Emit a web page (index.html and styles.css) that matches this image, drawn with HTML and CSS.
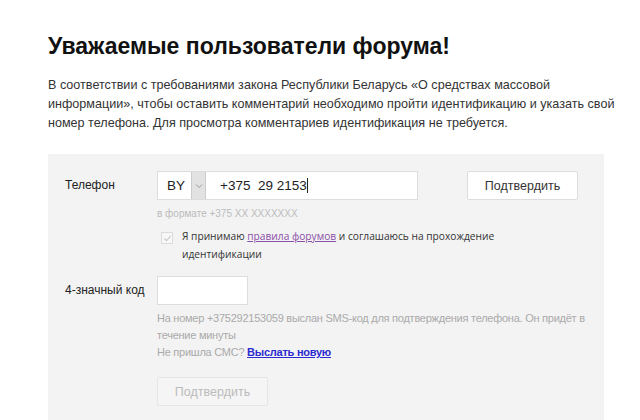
FILE: index.html
```html
<!DOCTYPE html>
<html lang="ru">
<head>
    <meta charset="UTF-8">
    <title>Идентификация</title>
    <link rel="stylesheet" href="styles.css">
</head>
<body>
    <div class="page">
        <h1>Уважаемые пользователи форума!</h1>
        <p class="intro">В соответствии с требованиями закона Республики Беларусь «О средствах массовой информации», чтобы оставить комментарий необходимо пройти идентификацию и указать свой номер телефона. Для просмотра комментариев идентификация не требуется.</p>

        <div class="panel">
            <div class="row">
                <div class="label">Телефон</div>
                <div class="field">
                    <div class="phone">
                        <div class="country">BY</div>
                        <div class="arrow">
                            <svg width="8" height="6" viewBox="0 0 8 6"><path d="M1 1.5 L4 4.5 L7 1.5" fill="none" stroke="#999" stroke-width="1"/></svg>
                        </div>
                        <div class="number">+375&nbsp; 29 2153<span class="caret"></span></div>
                    </div>
                    <div class="hint">в формате +375 XX XXXXXXX</div>
                    <div class="agree">
                        <span class="check">
                            <svg width="9" height="9" viewBox="0 0 10 10"><path d="M1.5 5 L4 7.5 L8.5 2" fill="none" stroke="#c8c8c8" stroke-width="1.2"/></svg>
                        </span>
                        <p class="agree-text">Я принимаю <a href="#" class="rules">правила форумов</a> и соглашаюсь на прохождение<br>идентификации</p>
                    </div>
                </div>
                <button class="btn">Подтвердить</button>
            </div>

            <div class="row">
                <div class="label">4-значный код</div>
                <div class="field">
                    <div class="code"></div>
                    <div class="sms">На номер +375292153059 выслан SMS-код для подтверждения телефона. Он придёт в течение минуты<br>Не пришла СМС? <a href="#" class="resend">Выслать новую</a></div>
                    <button class="btn btn-disabled">Подтвердить</button>
                </div>
            </div>
        </div>
    </div>
</body>
</html>
```

FILE: styles.css
```css
body {
    margin: 0;
    background: #fff;
    font-family: "Liberation Sans", Arial, sans-serif;
    color: #222;
}
.page {
    padding: 33px 0 0 48px;
}
h1 {
    margin: 0;
    font-size: 23px;
    font-weight: bold;
    color: #111;
}
.intro {
    margin: 16px 0 0;
    font-size: 12.6px;
    line-height: 19px;
    color: #333;
    width: 570px;
}
.panel {
    margin-top: 21px;
    background: #f3f3f3;
    padding: 17px 0 14px 17px;
    width: 539px;
}
.row {
    display: flex;
    align-items: flex-start;
}
.row + .row {
    margin-top: 13px;
}
.label {
    width: 92px;
    font-size: 12px;
    line-height: 29px;
    color: #222;
}
.field {
    width: 261px;
}
.phone {
    display: flex;
    height: 27px;
    border: 1px solid #ddd;
    background: #fff;
    font-size: 13.5px;
    color: #222;
}
.country {
    width: 24px;
    padding-left: 9px;
    line-height: 27px;
}
.arrow {
    width: 13px;
    background: #e2e2e2;
    border-left: 1px solid #ccc;
    border-right: 1px solid #ccc;
    display: flex;
    align-items: center;
    justify-content: center;
}
.number {
    padding-left: 14px;
    line-height: 27px;
}
.caret {
    display: inline-block;
    width: 1px;
    height: 15px;
    background: #222;
    vertical-align: -3px;
}
.hint {
    margin-top: 8px;
    font-size: 10px;
    color: #bbb;
}
.agree {
    display: flex;
    align-items: flex-start;
    margin-top: 8px;
    width: 360px;
}
.check {
    flex: none;
    width: 10px;
    height: 10px;
    margin: 5px 9px 0 4px;
    border: 1px solid #dcdcdc;
    background: #f7f7f7;
    display: flex;
    align-items: center;
    justify-content: center;
}
.agree-text {
    margin: 0;
    font-family: "Open Sans", "DejaVu Sans", sans-serif;
    font-size: 10.2px;
    line-height: 18px;
    color: #333;
}
.rules {
    color: #8c4fa8;
}
.btn {
    margin-left: 49px;
    width: 111px;
    height: 29px;
    background: #fff;
    border: 1px solid #ddd;
    border-radius: 2px;
    font-family: "Liberation Sans", Arial, sans-serif;
    font-size: 12.5px;
    color: #333;
    padding: 0;
}
.code {
    width: 89px;
    height: 27px;
    background: #fff;
    border: 1px solid #ddd;
}
.sms {
    margin-top: 5px;
    width: 440px;
    font-size: 11px;
    letter-spacing: -0.25px;
    line-height: 17px;
    color: #aaa;
}
.resend {
    color: #2a2ad0;
    font-weight: bold;
}
.btn-disabled {
    display: block;
    margin: 16px 0 0;
    background: #f5f5f5;
    border-color: #e6e6e6;
    color: #bbb;
}
```
